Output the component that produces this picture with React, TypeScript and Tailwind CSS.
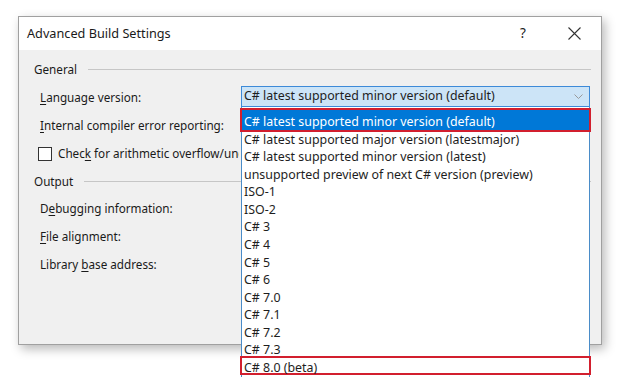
import React from "react";

const items = [
  "C# latest supported minor version (default)",
  "C# latest supported major version (latestmajor)",
  "C# latest supported minor version (latest)",
  "unsupported preview of next C# version (preview)",
  "ISO-1",
  "ISO-2",
  "C# 3",
  "C# 4",
  "C# 5",
  "C# 6",
  "C# 7.0",
  "C# 7.1",
  "C# 7.2",
  "C# 7.3",
  "C# 8.0 (beta)",
];

function U({ children }: { children: React.ReactNode }) {
  return <span className="underline underline-offset-2 decoration-1">{children}</span>;
}

export default function App() {
  return (
    <div
      className="w-[620px] h-[389px] bg-white overflow-hidden text-[#1a1a1a]"
      style={{ fontFamily: '"Noto Sans", "Open Sans", sans-serif' }}
    >
      <div className="ml-[18px] mt-[16px] w-[584px] h-[329px] border border-[#a0a0a0] bg-[#f0f0f0] shadow-[3px_4px_10px_rgba(0,0,0,0.28)] flex flex-col">
        <div className="h-[33px] bg-white flex items-center pl-[8px] text-[12.7px]">
          <span className="flex-1">Advanced Build Settings</span>
          <span className="w-[14px] text-center text-[13.5px] text-[#222] mr-[38px]">?</span>
          <svg width="13" height="13" viewBox="0 0 13 13" className="mr-[20px]">
            <path d="M0.5 0.5L12.5 12.5M12.5 0.5L0.5 12.5" stroke="#333" strokeWidth="1.1" />
          </svg>
        </div>
        <div className="flex-1 pl-[15px] pr-[10px] pt-[12px] text-[11.7px]">
          <div className="flex items-center h-[16px]">
            <span>General</span>
            <div className="flex-1 h-px bg-[#c6c6c6] ml-[11px] -mt-[1px]" />
          </div>
          <div className="flex items-center h-[21px] mt-[8px] pl-[6px]">
            <span className="w-[201px] mt-[3px]">
              <U>L</U>anguage version:
            </span>
            <div className="relative w-[349px] h-[21px] text-[12.4px]">
              <div className="h-full border border-[#3d8ad8] bg-[#cce4f7] flex items-center pl-[2px] pr-[6px]">
                <span className="flex-1 text-[#1e1e1e]">C# latest supported minor version (default)</span>
                <svg width="9" height="6" viewBox="0 0 9 6">
                  <path d="M0.5 0.5L4.5 4.5L8.5 0.5" stroke="#999" fill="none" strokeWidth="1" />
                </svg>
              </div>
              <div className="absolute left-0 top-[21px] w-[349px] h-[270px] bg-white border-x border-[#4a8cc8] pt-[6px] z-10 text-[#1e1e1e]">
                {items.map((t, i) => {
                  const first = i === 0;
                  const last = i === items.length - 1;
                  return (
                    <div
                      key={t}
                      className="h-[17.57px] leading-[17.57px] pl-[2px] whitespace-nowrap relative"
                    >
                      {first && (
                        <div className="absolute -left-[2px] -right-[2px] -top-[5px] -bottom-[1px] border-2 border-[#d21f2e] bg-[#0078d7]" />
                      )}
                      {last && (
                        <div className="absolute -left-[2px] -right-[2px] -top-[3px] bottom-[1px] border-2 border-[#d21f2e]" />
                      )}
                      <span className={"relative " + (first ? "text-white" : "")}>{t}</span>
                    </div>
                  );
                })}
              </div>
            </div>
          </div>
          <div className="flex items-center h-[20px] mt-[9px] pl-[6px]">
            <span>
              <U>I</U>nternal compiler error reporting:
            </span>
          </div>
          <div className="flex items-center h-[20px] mt-[8px] pl-[4px]">
            <span className="w-[14px] h-[14px] border border-[#333] bg-white mr-[6px] shrink-0" />
            <span className="w-[181px] overflow-hidden whitespace-nowrap">
              Chec<U>k</U> for arithmetic overflow/underflow
            </span>
          </div>
          <div className="flex items-center h-[16px] mt-[10px]">
            <span>Output</span>
            <div className="flex-1 h-px bg-[#c6c6c6] ml-[11px] -mt-[2px]" />
          </div>
          <div className="flex items-center h-[20px] mt-[9px] pl-[6px]">
            <span>
              D<U>e</U>bugging information:
            </span>
          </div>
          <div className="flex items-center h-[20px] mt-[8px] pl-[6px]">
            <span>
              <U>F</U>ile alignment:
            </span>
          </div>
          <div className="flex items-center h-[20px] mt-[8px] pl-[6px]">
            <span>
              Library <U>b</U>ase address:
            </span>
          </div>
        </div>
      </div>
    </div>
  );
}
